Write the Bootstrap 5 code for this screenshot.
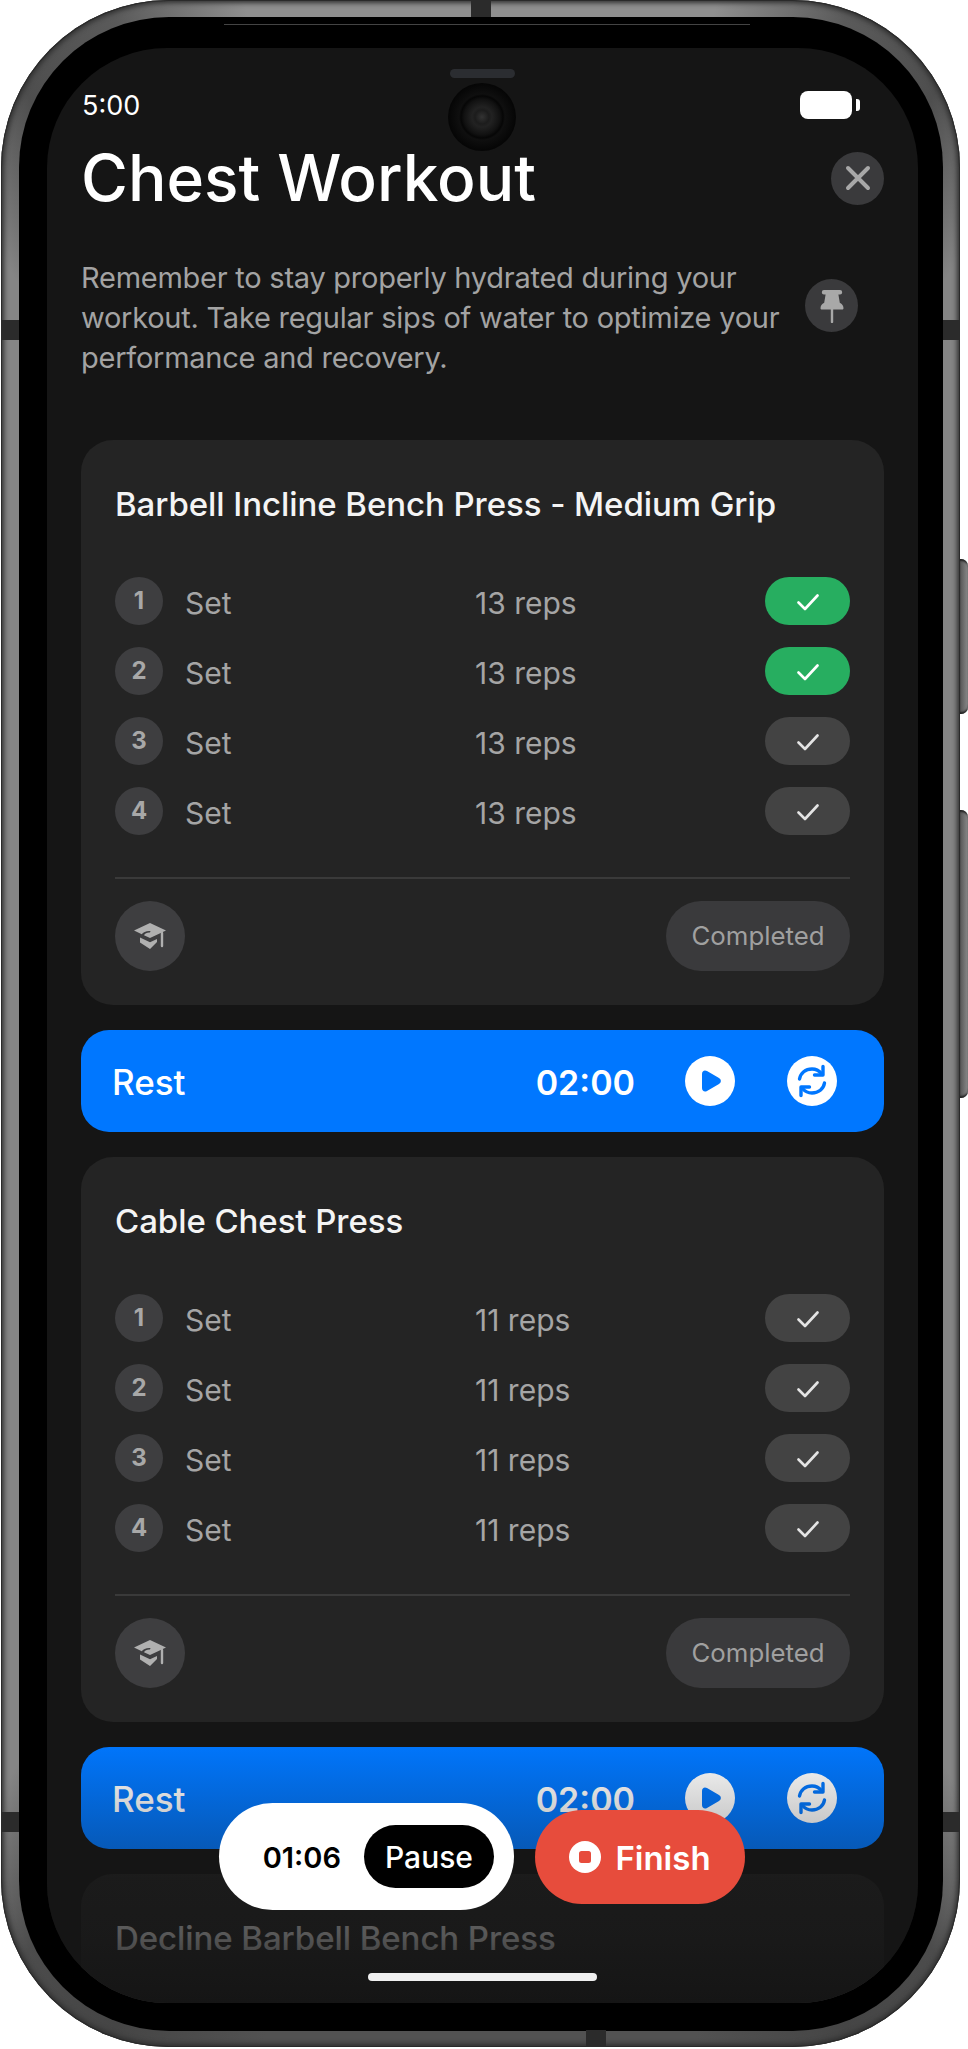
<!DOCTYPE html>
<html lang="en">
<head>
  <meta charset="UTF-8">
  <meta name="viewport" content="width=device-width, initial-scale=1.0">
  <link rel="stylesheet" href="https://cdn.jsdelivr.net/npm/bootstrap@5.3.0/dist/css/bootstrap.min.css">
  <title>Chest Workout</title>
  <style>
    html, body { background: #fff; margin: 0; }
    body { font-family: Inter, "Liberation Sans", sans-serif; width: 968px; height: 2049px; overflow: hidden; }

    /* phone shell */
    .phone-wrap { position: relative; width: 968px; height: 2049px; }
    .phone-frame { width: 959px; height: 2047px; margin-left: 1px; padding: 17px 17px 16px 18px; border-radius: 168px; background: conic-gradient(#8f8f8f 0 13deg, #5a5a5a 20deg, #4e4e4e 26deg, #858585 32deg, #858585 148deg, #4c4c4c 154deg, #454545 160deg, #525252 168deg, #525252 192deg, #454545 200deg, #4c4c4c 206deg, #858585 212deg, #858585 328deg, #4e4e4e 334deg, #5a5a5a 340deg, #8f8f8f 347deg); box-shadow: inset 0 0 0 1px #2a2a2a, inset 0 0 5px 3px #303030; }
    .phone-black { height: 100%; padding: 31px 25px 28px 28px; border-radius: 150px; background: #000; }
    .phone-screen { position: relative; height: 100%; overflow: hidden; padding: 43px 34px 0 34px; border-radius: 120px; background: #151515; color: #fff; }
    .side-key { position: absolute; right: 0; width: 8px; background: linear-gradient(90deg, #555, #8a8a8a); border-radius: 0 7px 7px 0; box-shadow: inset 0 3px 2px -1px #222, inset 0 -3px 2px -1px #222; }
    .key-a { top: 559px; height: 155px; }
    .key-b { top: 810px; height: 288px; }
    .band { position: absolute; background: #2b2b2b; }
    .band-top { left: 471px; top: 0; width: 20px; height: 17px; }
    .band-bot { left: 586px; top: 2030px; width: 20px; height: 17px; }
    .band-l { left: 2px; width: 17px; height: 20px; }
    .band-r { left: 943px; width: 16px; height: 20px; }
    .band-y1 { top: 320px; }
    .band-y2 { top: 1812px; }
    .notch-line { position: absolute; left: 224px; top: 24px; width: 526px; height: 1px; background: #444; }

    /* camera */
    .speaker { position: absolute; left: 403px; top: 21px; width: 65px; height: 9px; border-radius: 5px; background: #2b2d31; }
    .camera { position: absolute; left: 401px; top: 35px; width: 68px; height: 68px; border-radius: 50%; background: radial-gradient(circle at 50% 50%, #333 0, #1c1c1c 7px, #222 10px, #111 18px, #060606 21px, #0f0f0f 23px, #050505 34px); }

    /* header */
    .status-row { height: 28px; }
    .clock { font-size: 27px; line-height: 28px; margin-left: 1px; padding-top: 2px; }
    .battery { width: 52px; height: 28px; border-radius: 8px; background: #fff; position: relative; margin-left: auto; margin-right: 32px; }
    .battery::after { content: ""; position: absolute; right: -8px; top: 8px; width: 4px; height: 12px; border-radius: 0 3px 3px 0; background: #fff; }
    .page-title { font-size: 64px; line-height: 72px; font-weight: 500; margin: 0; }
    .round-btn { width: 53px; height: 53px; padding: 0; border: 0; background: #3a3a3c; }
    .title-row { margin-top: 23px; }
    .hint-row { margin-top: 44px; margin-bottom: 62px; }
    .hint-text { font-size: 29px; line-height: 40px; letter-spacing: -.25px; color: #a3a3a3; margin: 0; width: 723px; }
    .pin-btn { margin: 21px 26px 0 0; }

    /* exercise card */
    .set-card { height: 565px; border: 0; border-radius: 32px; background: #242424; padding: 44px 34px 34px; margin-bottom: 25px; }
    .set-name { font-size: 33px; line-height: 40px; font-weight: 500; letter-spacing: -.07px; color: #f4f4f4; margin: 0 0 53px; }
    .set-list { gap: 22px; }
    .set-row { height: 48px; }
    .set-num { width: 48px; height: 48px; margin-right: 22px; background: #3e3e40; color: #a8a8a8; font-size: 24px; font-weight: 700; }
    .set-label { width: 290px; font-size: 30px; color: #a5a5a5; padding-top: 5px; }
    .set-reps { font-size: 30px; color: #a5a5a5; padding-top: 5px; }
    .set-check { width: 85px; height: 48px; padding: 0; border: 0; background: #434343; }
    .set-check.is-done { background: #27ae60; }
    .set-rule { height: 3px; margin: 42px 0 22px; background: #3a3a3a; }
    .learn-btn { width: 70px; height: 70px; padding: 0; border: 0; background: #3e3e40; }
    .done-btn { width: 184px; height: 70px; padding: 0; border: 0; background: #3a3a3c; color: #a0a0a0; font-size: 25.800px; }
    .done-btn:hover, .done-btn:focus { background: #3a3a3c; color: #a0a0a0; }

    /* rest bar */
    .rest-bar { height: 102px; border-radius: 28px; background: #0077ff; padding: 0 47px 0 31px; margin-bottom: 25px; }
    .rest-label { font-size: 35px; font-weight: 500; padding-top: 3px; }
    .rest-time { font-size: 34px; font-weight: 600; margin-right: 50px; padding-top: 3px; }
    .rest-icon { width: 50px; height: 50px; flex: none; }
    .rest-gap { margin-left: 52px; }

    /* bottom fade and floating controls */
    .fade-layer { position: absolute; left: 0; right: 0; bottom: 0; height: 263px; background: linear-gradient(180deg, rgba(21,21,21,0) 0, rgba(21,21,21,.3) 108px, rgba(21,21,21,.62) 140px, rgba(21,21,21,.7) 195px, #151515 263px); }
    .float-bar { position: absolute; left: 219px; top: 1803px; height: 107px; gap: 21px; }
    .timer-pill { width: 295px; height: 107px; padding-right: 20px; background: #fff; color: #000; }
    .timer-text { font-size: 29px; font-weight: 600; margin-right: 23px; padding-top: 3px; }
    .pause-btn { width: 130px; height: 63px; padding: 2px 0 0; border: 0; background: #000; color: #fff; font-size: 30px; font-weight: 500; }
    .pause-btn:hover { background: #000; color: #fff; }
    .finish-btn { width: 210px; height: 94px; padding: 0; border: 0; gap: 14px; background: #e74c3c; color: #fff; font-size: 33px; font-weight: 600; }
    .finish-btn:hover { background: #e74c3c; color: #fff; }
    .finish-text { padding-top: 5px; }
    .home-bar { position: absolute; left: 321px; bottom: 22px; width: 229px; height: 8px; border-radius: 4px; background: #efefef; }
  </style>
</head>
<body>
  <div class="phone-wrap">
    <div class="phone-frame">
      <div class="phone-black">
        <div class="phone-screen">
          <div class="speaker"></div>
          <div class="camera"></div>

          <!-- status -->
          <div class="status-row d-flex align-items-center">
            <span class="clock">5:00</span>
            <span class="battery"></span>
          </div>

          <!-- title -->
          <div class="title-row d-flex justify-content-between align-items-center">
            <h1 class="page-title">Chest Workout</h1>
            <button type="button" class="btn round-btn rounded-circle d-flex align-items-center justify-content-center" aria-label="Close">
              <svg width="26" height="26" viewBox="0 0 26 26"><path d="M3 3 23 23M23 3 3 23" stroke="#a8a8a8" stroke-width="4" stroke-linecap="round"/></svg>
            </button>
          </div>

          <div class="hint-row d-flex justify-content-between align-items-start">
            <p class="hint-text">Remember to stay properly hydrated during your workout. Take regular sips of water to optimize your performance and recovery.</p>
            <button type="button" class="btn round-btn pin-btn rounded-circle d-flex align-items-center justify-content-center" aria-label="Pin">
              <svg width="24" height="34" viewBox="0 0 24 34"><path d="M4 1h16a1.6 1.6 0 0 1 0 4.4h-1.6l1.4 8.4c2.3 1.2 3.7 3 3.7 5.4 0 .8-.6 1.3-1.3 1.3H1.8c-.7 0-1.3-.5-1.3-1.3 0-2.4 1.4-4.2 3.7-5.4l1.4-8.4H4A1.6 1.6 0 0 1 4 1Z" fill="#a8a8a8"/><path d="M12 20v13" stroke="#a8a8a8" stroke-width="2.4" stroke-linecap="round"/></svg>
            </button>
          </div>

          <!-- first exercise -->
          <div class="card set-card">
            <h2 class="set-name">Barbell Incline Bench Press - Medium Grip</h2>
            <div class="set-list d-flex flex-column">
              <div class="set-row d-flex align-items-center">
                <span class="set-num rounded-circle d-flex align-items-center justify-content-center">1</span>
                <span class="set-label">Set</span>
                <span class="set-reps flex-grow-1">13 reps</span>
                <button type="button" class="btn set-check is-done rounded-pill"><svg width="24" height="18" viewBox="0 1 24 18"><path d="M2.5 9.5 9 16 21.5 2.5" fill="none" stroke="#fff" stroke-width="2.6" stroke-linecap="round" stroke-linejoin="round"/></svg></button>
              </div>
              <div class="set-row d-flex align-items-center">
                <span class="set-num rounded-circle d-flex align-items-center justify-content-center">2</span>
                <span class="set-label">Set</span>
                <span class="set-reps flex-grow-1">13 reps</span>
                <button type="button" class="btn set-check is-done rounded-pill"><svg width="24" height="18" viewBox="0 1 24 18"><path d="M2.5 9.5 9 16 21.5 2.5" fill="none" stroke="#fff" stroke-width="2.6" stroke-linecap="round" stroke-linejoin="round"/></svg></button>
              </div>
              <div class="set-row d-flex align-items-center">
                <span class="set-num rounded-circle d-flex align-items-center justify-content-center">3</span>
                <span class="set-label">Set</span>
                <span class="set-reps flex-grow-1">13 reps</span>
                <button type="button" class="btn set-check rounded-pill"><svg width="24" height="18" viewBox="0 1 24 18"><path d="M2.5 9.5 9 16 21.5 2.5" fill="none" stroke="#e4e4e4" stroke-width="2.6" stroke-linecap="round" stroke-linejoin="round"/></svg></button>
              </div>
              <div class="set-row d-flex align-items-center">
                <span class="set-num rounded-circle d-flex align-items-center justify-content-center">4</span>
                <span class="set-label">Set</span>
                <span class="set-reps flex-grow-1">13 reps</span>
                <button type="button" class="btn set-check rounded-pill"><svg width="24" height="18" viewBox="0 1 24 18"><path d="M2.5 9.5 9 16 21.5 2.5" fill="none" stroke="#e4e4e4" stroke-width="2.6" stroke-linecap="round" stroke-linejoin="round"/></svg></button>
              </div>
            </div>
            <div class="set-rule"></div>
            <div class="d-flex justify-content-between align-items-center">
              <button type="button" class="btn learn-btn rounded-circle d-flex align-items-center justify-content-center" aria-label="Instructions">
                <svg width="34" height="28" viewBox="0 0 34 28"><path d="M17 1 33 8.5 17 16 11 13.2c1-2 3.600-3 6-2.700l.5-1.500c-3.500-.5-7.500 1-8.700 3.200L1 8.500Z" fill="#b0b0b0"/><path d="M7 15.500 17 20.300l7-3.300v3L17 27l-10-6.500Z" fill="#b0b0b0"/><path d="M29 11v13" stroke="#b0b0b0" stroke-width="2.400" stroke-linecap="round"/></svg>
              </button>
              <button type="button" class="btn done-btn rounded-pill">Completed</button>
            </div>
          </div>

          <!-- rest -->
          <div class="rest-bar d-flex align-items-center">
            <span class="rest-label me-auto">Rest</span>
            <span class="rest-time">02:00</span>
            <svg class="rest-icon" viewBox="0 0 50 50"><circle cx="25" cy="25" r="25" fill="#fff"/><path d="M17 18c0-3 2.500-4.500 5-3l12 7c2.500 1.500 2.500 4.500 0 6l-12 7c-2.500 1.500-5 0-5-3Z" fill="#0077ff"/></svg>
            <svg class="rest-icon rest-gap" viewBox="0 0 50 50"><circle cx="25" cy="25" r="25" fill="#fff"/><path d="M12.500 23c1-6 6-10 12.500-10 4 0 7 1.500 9.500 4.500M37.500 27c-1 6-6 10-12.500 10-4 0-7-1.500-9.500-4.500" fill="none" stroke="#0077ff" stroke-width="3.400" stroke-linecap="round"/><path d="M36 10.500V19h-8.500M14 39.500V31h8.500" fill="none" stroke="#0077ff" stroke-width="3.400" stroke-linecap="round" stroke-linejoin="round"/></svg>
          </div>

          <!-- second exercise -->
          <div class="card set-card">
            <h2 class="set-name">Cable Chest Press</h2>
            <div class="set-list d-flex flex-column">
              <div class="set-row d-flex align-items-center">
                <span class="set-num rounded-circle d-flex align-items-center justify-content-center">1</span>
                <span class="set-label">Set</span>
                <span class="set-reps flex-grow-1">11 reps</span>
                <button type="button" class="btn set-check rounded-pill"><svg width="24" height="18" viewBox="0 1 24 18"><path d="M2.5 9.5 9 16 21.5 2.5" fill="none" stroke="#e4e4e4" stroke-width="2.6" stroke-linecap="round" stroke-linejoin="round"/></svg></button>
              </div>
              <div class="set-row d-flex align-items-center">
                <span class="set-num rounded-circle d-flex align-items-center justify-content-center">2</span>
                <span class="set-label">Set</span>
                <span class="set-reps flex-grow-1">11 reps</span>
                <button type="button" class="btn set-check rounded-pill"><svg width="24" height="18" viewBox="0 1 24 18"><path d="M2.5 9.5 9 16 21.5 2.5" fill="none" stroke="#e4e4e4" stroke-width="2.6" stroke-linecap="round" stroke-linejoin="round"/></svg></button>
              </div>
              <div class="set-row d-flex align-items-center">
                <span class="set-num rounded-circle d-flex align-items-center justify-content-center">3</span>
                <span class="set-label">Set</span>
                <span class="set-reps flex-grow-1">11 reps</span>
                <button type="button" class="btn set-check rounded-pill"><svg width="24" height="18" viewBox="0 1 24 18"><path d="M2.5 9.5 9 16 21.5 2.5" fill="none" stroke="#e4e4e4" stroke-width="2.6" stroke-linecap="round" stroke-linejoin="round"/></svg></button>
              </div>
              <div class="set-row d-flex align-items-center">
                <span class="set-num rounded-circle d-flex align-items-center justify-content-center">4</span>
                <span class="set-label">Set</span>
                <span class="set-reps flex-grow-1">11 reps</span>
                <button type="button" class="btn set-check rounded-pill"><svg width="24" height="18" viewBox="0 1 24 18"><path d="M2.5 9.5 9 16 21.5 2.5" fill="none" stroke="#e4e4e4" stroke-width="2.6" stroke-linecap="round" stroke-linejoin="round"/></svg></button>
              </div>
            </div>
            <div class="set-rule"></div>
            <div class="d-flex justify-content-between align-items-center">
              <button type="button" class="btn learn-btn rounded-circle d-flex align-items-center justify-content-center" aria-label="Instructions">
                <svg width="34" height="28" viewBox="0 0 34 28"><path d="M17 1 33 8.5 17 16 11 13.2c1-2 3.600-3 6-2.700l.5-1.500c-3.500-.5-7.500 1-8.700 3.200L1 8.500Z" fill="#b0b0b0"/><path d="M7 15.500 17 20.300l7-3.300v3L17 27l-10-6.500Z" fill="#b0b0b0"/><path d="M29 11v13" stroke="#b0b0b0" stroke-width="2.400" stroke-linecap="round"/></svg>
              </button>
              <button type="button" class="btn done-btn rounded-pill">Completed</button>
            </div>
          </div>

          <!-- rest -->
          <div class="rest-bar d-flex align-items-center">
            <span class="rest-label me-auto">Rest</span>
            <span class="rest-time">02:00</span>
            <svg class="rest-icon" viewBox="0 0 50 50"><circle cx="25" cy="25" r="25" fill="#fff"/><path d="M17 18c0-3 2.500-4.500 5-3l12 7c2.500 1.500 2.500 4.500 0 6l-12 7c-2.500 1.500-5 0-5-3Z" fill="#0077ff"/></svg>
            <svg class="rest-icon rest-gap" viewBox="0 0 50 50"><circle cx="25" cy="25" r="25" fill="#fff"/><path d="M12.500 23c1-6 6-10 12.500-10 4 0 7 1.500 9.500 4.500M37.500 27c-1 6-6 10-12.500 10-4 0-7-1.500-9.500-4.500" fill="none" stroke="#0077ff" stroke-width="3.400" stroke-linecap="round"/><path d="M36 10.500V19h-8.500M14 39.500V31h8.500" fill="none" stroke="#0077ff" stroke-width="3.400" stroke-linecap="round" stroke-linejoin="round"/></svg>
          </div>

          <!-- third exercise, mostly under the fade -->
          <div class="card set-card">
            <h2 class="set-name">Decline Barbell Bench Press</h2>
          </div>

          <div class="fade-layer"></div>
          <div class="home-bar"></div>
        </div>
      </div>
    </div>

    <div class="side-key key-a"></div>
    <div class="side-key key-b"></div>
    <div class="band band-top"></div>
    <div class="band band-bot"></div>
    <div class="band band-l band-y1"></div>
    <div class="band band-r band-y1"></div>
    <div class="band band-l band-y2"></div>
    <div class="band band-r band-y2"></div>
    <div class="notch-line"></div>

    <!-- floating controls -->
    <div class="float-bar d-flex align-items-center">
      <div class="timer-pill rounded-pill d-flex align-items-center justify-content-end">
        <span class="timer-text">01:06</span>
        <button type="button" class="btn pause-btn rounded-pill">Pause</button>
      </div>
      <button type="button" class="btn finish-btn rounded-pill d-flex align-items-center justify-content-center">
        <svg width="32" height="32" viewBox="0 0 32 32"><circle cx="16" cy="16" r="16" fill="#fff"/><rect x="10" y="10" width="12" height="12" rx="2.500" fill="#e74c3c"/></svg>
        <span class="finish-text">Finish</span>
      </button>
    </div>
  </div>
</body>
</html>
